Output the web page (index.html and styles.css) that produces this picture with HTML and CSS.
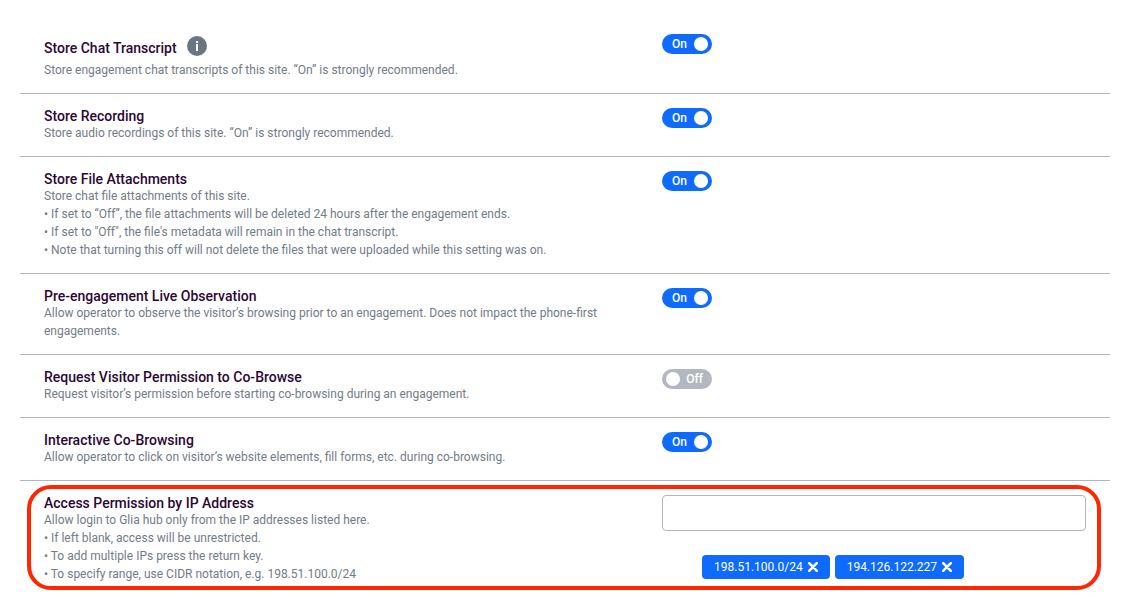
FILE: index.html
```html
<!DOCTYPE html>
<html lang="en">
<head>
<meta charset="utf-8">
<meta name="viewport" content="width=device-width, initial-scale=1">
<title>Site settings</title>
<link rel="stylesheet" href="styles.css">
</head>
<body>
<main class="settings">
  <section class="setting">
    <div class="setting-text">
      <div class="title-line">
        <h2 class="title" id="t-chat">Store Chat Transcript</h2>
        <button class="info" type="button" aria-label="More information">
          <svg viewBox="0 0 20 20" width="20" height="20" aria-hidden="true"><circle cx="10" cy="10" r="10" fill="#6c7683"/><path d="M9 5h2v2H9zM9 8h2v7H9z" fill="#fff"/></svg>
        </button>
      </div>
      <p class="desc">Store engagement chat transcripts of this site. “On” is strongly recommended.</p>
    </div>
    <label class="toggle"><input type="checkbox" role="switch" aria-labelledby="t-chat" checked><span class="on">On</span><span class="off">Off</span></label>
  </section>

  <section class="setting">
    <div class="setting-text">
      <h2 class="title" id="t-rec">Store Recording</h2>
      <p class="desc">Store audio recordings of this site. “On” is strongly recommended.</p>
    </div>
    <label class="toggle"><input type="checkbox" role="switch" aria-labelledby="t-rec" checked><span class="on">On</span><span class="off">Off</span></label>
  </section>

  <section class="setting">
    <div class="setting-text">
      <h2 class="title" id="t-files">Store File Attachments</h2>
      <p class="desc">Store chat file attachments of this site.<br>• If set to “Off”, the file attachments will be deleted 24 hours after the engagement ends.<br>• If set to "Off", the file's metadata will remain in the chat transcript.<br>• Note that turning this off will not delete the files that were uploaded while this setting was on.</p>
    </div>
    <label class="toggle"><input type="checkbox" role="switch" aria-labelledby="t-files" checked><span class="on">On</span><span class="off">Off</span></label>
  </section>

  <section class="setting">
    <div class="setting-text">
      <h2 class="title" id="t-live">Pre-engagement Live Observation</h2>
      <p class="desc">Allow operator to observe the visitor’s browsing prior to an engagement. Does not impact the phone-first engagements.</p>
    </div>
    <label class="toggle"><input type="checkbox" role="switch" aria-labelledby="t-live" checked><span class="on">On</span><span class="off">Off</span></label>
  </section>

  <section class="setting">
    <div class="setting-text">
      <h2 class="title" id="t-perm">Request Visitor Permission to Co-Browse</h2>
      <p class="desc">Request visitor’s permission before starting co-browsing during an engagement.</p>
    </div>
    <label class="toggle"><input type="checkbox" role="switch" aria-labelledby="t-perm"><span class="on">On</span><span class="off">Off</span></label>
  </section>

  <section class="setting">
    <div class="setting-text">
      <h2 class="title" id="t-cobrowse">Interactive Co-Browsing</h2>
      <p class="desc">Allow operator to click on visitor’s website elements, fill forms, etc. during co-browsing.</p>
    </div>
    <label class="toggle"><input type="checkbox" role="switch" aria-labelledby="t-cobrowse" checked><span class="on">On</span><span class="off">Off</span></label>
  </section>

  <section class="setting highlighted">
    <div class="setting-text">
      <h2 class="title"><label for="ip">Access Permission by IP Address</label></h2>
      <p class="desc">Allow login to Glia hub only from the IP addresses listed here.<br>• If left blank, access will be unrestricted.<br>• To add multiple IPs press the return key.<br>• To specify range, use CIDR notation, e.g. 198.51.100.0/24</p>
    </div>
    <div class="ip-field">
      <input class="ip-input" id="ip" type="text">
      <ul class="chips">
        <li class="chip">198.51.100.0/24
          <button class="remove" type="button" aria-label="Remove 198.51.100.0/24"><svg viewBox="0 0 10 10" width="10" height="10" aria-hidden="true"><path d="M1.2 1.2l7.6 7.6M8.8 1.2l-7.6 7.6" stroke="#fff" stroke-width="2.6" stroke-linecap="round"/></svg></button>
        </li>
        <li class="chip">194.126.122.227
          <button class="remove" type="button" aria-label="Remove 194.126.122.227"><svg viewBox="0 0 10 10" width="10" height="10" aria-hidden="true"><path d="M1.2 1.2l7.6 7.6M8.8 1.2l-7.6 7.6" stroke="#fff" stroke-width="2.6" stroke-linecap="round"/></svg></button>
        </li>
      </ul>
    </div>
  </section>
</main>
</body>
</html>
```
FILE: styles.css
```css
* {
  box-sizing: border-box;
}

body {
  margin: 0;
  background: #fff;
  color: #727c89;
  font: 400 12px/18px Roboto, "Liberation Sans", sans-serif;
}

.settings {
  padding: 20px 20px 0;
}

.setting {
  display: grid;
  grid-template-columns: minmax(0, 618fr) minmax(0, 424fr);
  align-items: start;
  padding: 14px 24px;
  border-bottom: 1px solid #b0b5bf;
}

.title-line {
  display: flex;
  gap: 10px;
  height: 27px;
  padding-top: 2px;
}

.title-line .title {
  padding-top: 4px;
}

.title {
  margin: 0;
  color: #2c0735;
  font-size: 14px;
  font-weight: 500;
  line-height: 16px;
}

.desc {
  margin: 0;
}

.info,
.remove {
  display: flex;
  padding: 0;
  border: 0;
  background: none;
  cursor: pointer;
}

.info {
  align-self: flex-start;
}

/* On/off switch */
.toggle {
  display: flex;
  align-items: center;
  justify-content: space-between;
  width: 50px;
  height: 20px;
  padding: 0 4px 0 10px;
  border-radius: 10px;
  background: #b3b8c0;
  color: #fff;
  font-weight: 500;
  cursor: pointer;
}

.toggle input {
  appearance: none;
  order: 1;
  width: 14px;
  height: 14px;
  margin: 0;
  border-radius: 50%;
  background: #fff;
}

.toggle:has(input:checked) {
  background: #0f6bff;
}

.toggle:not(:has(input:checked)) {
  padding: 0 9px 0 4px;
}

.toggle:not(:has(input:checked)) input {
  order: -1;
}

.toggle:not(:has(input:checked)) .on,
.toggle:has(input:checked) .off {
  display: none;
}

/* Row with a callout outline drawn over it */
.highlighted {
  position: relative;
  border-bottom: 0;
}

.highlighted::after {
  content: "";
  position: absolute;
  inset: 4px 9px 7px 7px;
  border: 4px solid #ff2600;
  border-radius: 24px;
  pointer-events: none;
}

.ip-input {
  display: block;
  width: 100%;
  height: 36px;
  padding: 0 12px;
  border: 1px solid #b0b5bf;
  border-radius: 4px;
  background: #fff;
  font: inherit;
}

.chips {
  display: flex;
  flex-wrap: wrap;
  gap: 5px;
  margin: 24px 0 0;
  padding: 0 0 0 40px;
  list-style: none;
}

.chip {
  display: flex;
  align-items: center;
  gap: 5px;
  height: 24px;
  padding: 0 12px;
  border-radius: 4px;
  background: #0f6bff;
  color: #fff;
}
```
